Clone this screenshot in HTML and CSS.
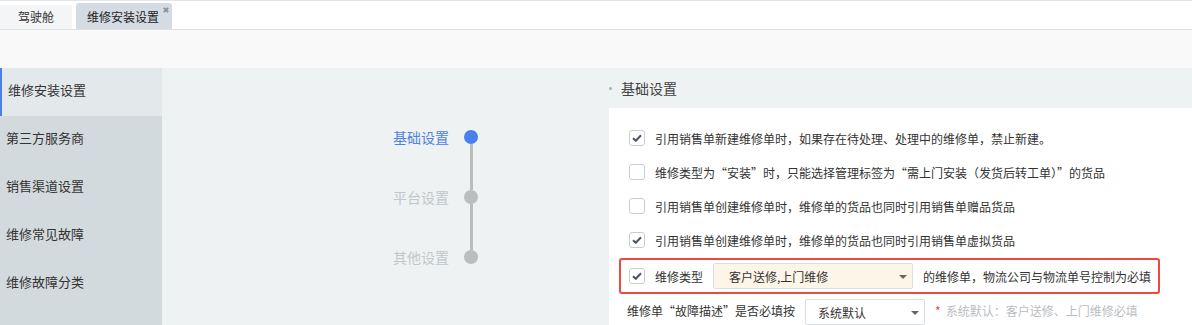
FILE: index.html
```html
<!DOCTYPE html>
<html lang="zh-CN">
<head>
  <meta charset="UTF-8" />
  <title>维修安装设置</title>
  <link rel="stylesheet" href="styles.css">
</head>
<body>
  <header class="tabbar">
    <div class="tab">驾驶舱</div>
    <div class="tab tab-active">
      维修安装设置
      <svg class="tab-close" width="6" height="6" viewBox="0 0 6 6"><path d="M0.8 0.8L5.2 5.2M5.2 0.8L0.8 5.2" stroke="#8a8f95" stroke-width="1.8"/></svg>
    </div>
  </header>

  <div class="toolbar"></div>

  <div class="layout">
    <aside class="sidenav">
      <div class="nav-item active">维修安装设置</div>
      <div class="nav-item">第三方服务商</div>
      <div class="nav-item">销售渠道设置</div>
      <div class="nav-item">维修常见故障</div>
      <div class="nav-item">维修故障分类</div>
    </aside>

    <main class="content">
      <div class="steps">
        <div class="step current">
          <span class="step-label">基础设置</span>
          <span class="rail"><i class="seg hidden"></i><b class="dot"></b><i class="seg"></i></span>
        </div>
        <div class="step">
          <span class="step-label">平台设置</span>
          <span class="rail"><i class="seg"></i><b class="dot"></b><i class="seg"></i></span>
        </div>
        <div class="step">
          <span class="step-label">其他设置</span>
          <span class="rail"><i class="seg"></i><b class="dot"></b><i class="seg hidden"></i></span>
        </div>
      </div>

      <section class="settings">
        <h2 class="section-title">基础设置</h2>
        <div class="card">
          <label class="row"><span class="checkbox checked"></span>引用销售单新建维修单时，如果存在待处理、处理中的维修单，禁止新建。</label>
          <label class="row"><span class="checkbox"></span>维修类型为“安装”时，只能选择管理标签为“需上门安装（发货后转工单）”的货品</label>
          <label class="row"><span class="checkbox"></span>引用销售单创建维修单时，维修单的货品也同时引用销售单赠品货品</label>
          <label class="row"><span class="checkbox checked"></span>引用销售单创建维修单时，维修单的货品也同时引用销售单虚拟货品</label>
          <div class="row highlight">
            <span class="checkbox checked"></span>维修类型
            <div class="select select-multi">客户送修,上门维修<span class="caret"></span></div>
            的维修单，物流公司与物流单号控制为必填
          </div>
          <div class="row plain">
            维修单“故障描述”是否必填按
            <div class="select select-default">系统默认<span class="caret"></span></div>
            <span class="hint"><em>*</em>系统默认：客户送修、上门维修必填</span>
          </div>
        </div>
      </section>
    </main>
  </div>
</body>
</html>
```

FILE: styles.css
```css
body {
  margin: 0;
  font-family: "Noto Sans CJK SC", "Noto Sans", sans-serif;
  color: #333;
  background: #fff;
  overflow: hidden;
}
.tabbar {
  display: flex;
  align-items: flex-end;
  gap: 4px;
  height: 30px;
  box-sizing: border-box;
  border-top: 1px solid #e3e6e9;
  border-bottom: 1px solid #dde1e4;
  background: #fff;
}
.tab {
  position: relative;
  height: 24px;
  line-height: 24px;
  width: 72px;
  text-align: center;
  font-size: 12px;
  background: #f4f5f6;
}
.tab-active {
  width: 96px;
  height: 26px;
  line-height: 28px;
  background: #d4dbe2;
  border-radius: 3px 3px 0 0;
  color: #222;
  text-indent: -2px;
}
.tab-close {
  position: absolute;
  top: 4px;
  right: 3px;
}
.toolbar {
  height: 38px;
  background: #f9f9f9;
}
.layout {
  display: flex;
  min-height: 257px;
}
.sidenav {
  width: 162px;
  background: #d3dadd;
  flex-shrink: 0;
}
.nav-item {
  height: 48px;
  line-height: 44px;
  padding-left: 6px;
  font-size: 13px;
  color: #333;
}
.nav-item.active {
  background: #e3e8ea;
  border-left: 2px solid #4a80e8;
}
.content {
  flex: 1;
  display: flex;
  background: #eef2f3;
}
.steps {
  width: 447px;
  flex-shrink: 0;
  padding-top: 39px;
}
.step {
  display: flex;
  justify-content: flex-end;
  align-items: center;
  gap: 15px;
  height: 60px;
  padding-right: 131px;
}
.step-label {
  font-size: 14px;
  color: #c3c7c9;
  line-height: 60px;
  padding-bottom: 1px;
}
.step.current .step-label {
  color: #4f82e6;
}
.rail {
  display: flex;
  flex-direction: column;
  align-items: center;
  width: 14px;
  height: 60px;
}
.seg {
  flex: 1;
  width: 3px;
  background: #b9bdbf;
}
.seg.hidden {
  background: transparent;
}
.dot {
  width: 14px;
  height: 14px;
  border-radius: 50%;
  background: #babebf;
}
.step.current .dot {
  background: #4a80ea;
}
.settings {
  flex: 1;
}
.section-title {
  display: flex;
  align-items: center;
  gap: 9px;
  margin: 0;
  height: 40px;
  font-size: 14px;
  font-weight: normal;
  color: #444;
}
.section-title::before {
  content: "";
  width: 3px;
  height: 3px;
  border-radius: 50%;
  background: #a9b0b4;
}
.card {
  background: #fff;
  padding: 13px 0 10px 20px;
  min-height: 200px;
}
.row {
  display: flex;
  align-items: center;
  gap: 10px;
  height: 34px;
  font-size: 12px;
  white-space: nowrap;
}
.checkbox {
  width: 16px;
  height: 16px;
  box-sizing: border-box;
  border: 1px solid #c9cdd2;
  border-radius: 3px;
  background: #fff center / 10px 8px no-repeat;
  flex-shrink: 0;
}
.checkbox.checked {
  background-image: url("data:image/svg+xml;utf8,<svg xmlns='http://www.w3.org/2000/svg' width='10' height='8' viewBox='0 0 10 8'><path d='M1 4.2L3.8 6.8L9 1.2' fill='none' stroke='%234b5366' stroke-width='2'/></svg>");
}
.highlight {
  width: 541px;
  height: 36px;
  box-sizing: border-box;
  margin: 1px 0 0 -10px;
  padding-left: 8px;
  border: 2px solid #ea4b3e;
  border-radius: 3px;
}
.select {
  position: relative;
  height: 26px;
  line-height: 26px;
  box-sizing: border-box;
  border: 1px solid #dcdfe2;
  border-radius: 2px;
  font-size: 12px;
  color: #333;
}
.select-multi {
  width: 200px;
  padding-left: 15px;
  background: #fdf6e8;
}
.select-default {
  width: 120px;
  padding-left: 12px;
  background: #fff;
  margin-top: 4px;
}
.caret {
  position: absolute;
  right: 5px;
  top: 11px;
  border-left: 4px solid transparent;
  border-right: 4px solid transparent;
  border-top: 4px solid #666;
}
.plain {
  margin-left: -2px;
  margin-top: -1px;
}
.hint {
  color: #babdc1;
}
.hint em {
  font-style: normal;
  color: #e8473b;
  margin-right: 5px;
}
```
